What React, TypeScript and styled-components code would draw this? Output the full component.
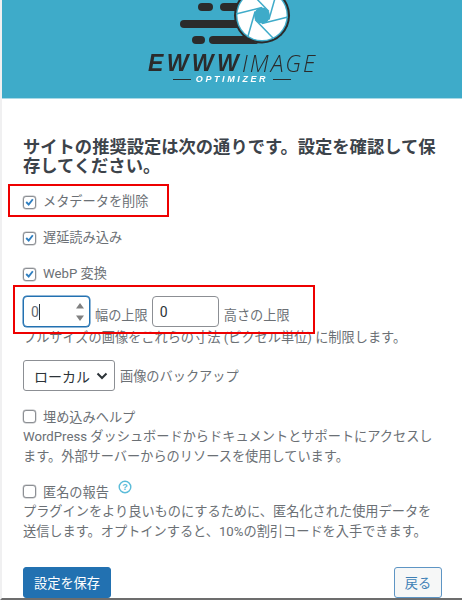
import React from "react";
import styled, { createGlobalStyle } from "styled-components";

const Global = createGlobalStyle`
  html, body { margin: 0; padding: 0; background: #fff; }
  body { width: 462px; height: 600px; overflow: hidden; }
`;
const FONT = `Roboto, "Noto Sans CJK JP", sans-serif`;
const JP = `"Noto Sans CJK JP", sans-serif`;

const Page = styled.div`
  position: relative;
  box-sizing: border-box;
  width: 462px;
  height: 600px;
  overflow: hidden;
  background: #fff;
  border-left: 2px solid #f0f0f1;
  border-bottom: 2px solid #6d6d6d;
  font-family: ${FONT};
  color: #6b7075;
  font-size: 13.2px;
`;
const Header = styled.header`
  height: 98px;
  background: #3eabc9;
  border-bottom: 1px solid #a9d9e6;
  display: flex;
  justify-content: center;
  overflow: hidden;
`;
const Logo = styled.div`
  width: 168px;
  height: 98px;
  display: flex;
  flex-direction: column;
  align-items: center;
  filter: blur(0.35px);
`;
const Mark = styled.svg`
  display: block;
  flex: none;
`;
const Wordmark = styled.div`
  margin-top: 5px;
  width: 168px;
  height: 20px;
  display: flex;
  align-items: center;
  justify-content: space-between;
  line-height: 20px;
  white-space: nowrap;
  color: #2b2b2b;
  font-family: "Liberation Sans", sans-serif;
  font-size: 23px;
`;
const Strong = styled.span`
  font-weight: 700;
  font-style: italic;
  letter-spacing: 3.4px;
`;
const Thin = styled.span`
  font-family: "Open Sans", sans-serif;
  font-weight: 300;
  font-style: italic;
  letter-spacing: 2px;
`;
const Tagline = styled.div`
  margin-top: 1px;
  display: flex;
  align-items: center;
  gap: 5px;
  color: #fff;
  font-family: "Liberation Sans", sans-serif;
  font-weight: 700;
  font-style: italic;
  font-size: 9px;
  letter-spacing: 2.6px;
  line-height: 10px;
`;
const Dash = styled.span`
  width: 18px;
  height: 1px;
  background: #2b2b2b;
`;
const Content = styled.main`
  padding: 37px 20px 0 21px;
`;
const Title = styled.h1`
  margin: 0 0 17px;
  font-family: ${JP};
  font-size: 17.3px;
  line-height: 19px;
  font-weight: 700;
  color: #3c434a;
  width: 420px;
`;
const CheckRow = styled.label<{ $gap?: number }>`
  display: flex;
  align-items: center;
  height: 22px;
  margin-bottom: ${(p) => p.$gap ?? 14}px;
  line-height: 22px;
`;
const Box = styled.span`
  box-sizing: border-box;
  width: 13px;
  height: 13px;
  margin-right: 7px;
  border: 1px solid #8c8f94;
  border-radius: 3px;
  background: #fff;
  box-shadow: 0 0 0 0.4px #b5b7ba;
  display: inline-flex;
  align-items: center;
  justify-content: center;
  flex: none;
`;
const Limits = styled.div`
  display: flex;
  align-items: center;
  height: 31px;
`;
const NumberField = styled.div<{ $focus?: boolean; $left?: number }>`
  box-sizing: border-box;
  width: 67px;
  height: 31px;
  margin-left: ${(p) => p.$left ?? 0}px;
  border: 1px solid ${(p) => (p.$focus ? "#2271b1" : "#8c8f94")};
  box-shadow: ${(p) => (p.$focus ? "0 0 0 0.5px #2271b1" : "none")};
  border-radius: 4px;
  padding: 0 7px;
  display: flex;
  align-items: center;
  justify-content: space-between;
  color: #2c3338;
  font-size: 14px;
  background: #fff;
`;
const Value = styled.span<{ $caret?: boolean }>`
  display: inline-block;
  line-height: 16px;
  color: ${(p) => (p.$caret ? "#646970" : "#2c3338")};
  border-right: ${(p) => (p.$caret ? "1px solid #2c3338" : "none")};
`;
const Spin = styled.svg`
  display: block;
  margin-right: -2px;
`;
const LimitLabel = styled.span`
  margin: 5px 0 0 5px;
  white-space: nowrap;
`;
const Desc = styled.p<{ $mt?: number }>`
  margin: ${(p) => p.$mt ?? 0}px 0 0;
  line-height: 19.5px;
  white-space: nowrap;
`;
const BackupRow = styled.div`
  display: flex;
  align-items: center;
  margin-top: 12.5px;
  height: 31px;
`;
const Select = styled.div`
  box-sizing: border-box;
  width: 92px;
  height: 31px;
  border: 1px solid #8c8f94;
  border-radius: 3px;
  display: flex;
  align-items: center;
  padding-left: 10px;
  gap: 6px;
  font-size: 14px;
  color: #2c3338;
  background: #fff;
  margin-right: 5px;
  white-space: nowrap;
`;
const Help = styled.label`
  display: flex;
  align-items: center;
  height: 20px;
  margin: 15px 0 1px;
`;
const HelpIcon = styled.svg`
  margin: -8px 0 0 9px;
  display: block;
`;
const Footer = styled.div`
  display: flex;
  justify-content: space-between;
  align-items: flex-end;
  margin-top: 25.5px;
`;
const Primary = styled.button`
  box-sizing: border-box;
  width: 88px;
  height: 31px;
  border: 1px solid #2271b1;
  border-radius: 3px;
  background: #2271b1;
  color: #fff;
  font-family: ${JP};
  font-size: 13.2px;
  padding: 0;
`;
const Secondary = styled.button`
  box-sizing: border-box;
  width: 48px;
  height: 31px;
  border: 1px solid #5e95c4;
  border-radius: 3px;
  background: #f6f7f7;
  color: #3d7fb5;
  font-family: ${JP};
  font-size: 13.2px;
  padding: 0;
`;
const Highlight = styled.div<{ $x: number; $y: number; $w: number; $h: number }>`
  position: absolute;
  box-sizing: border-box;
  left: ${(p) => p.$x - 2}px;
  top: ${(p) => p.$y}px;
  width: ${(p) => p.$w}px;
  height: ${(p) => p.$h}px;
  border: 2px solid #ee0000;
  pointer-events: none;
`;

const Tick = () => (
  <svg width="12" height="12" viewBox="0 0 20 20">
    <path d="M16 5 L8.5 14.5 L4 10" fill="none" stroke="#2f7fc1" strokeWidth="3.4" />
  </svg>
);

const LogoMark = () => (
  <Mark width="168" height="48" viewBox="0 0 168 48">
    <rect x="50" y="3" width="15" height="8" rx="4" fill="#2b2b2b" />
    <path d="M76 3 H105 V11 H76 a4 4 0 0 1 0 -8Z" fill="#2b2b2b" />
    <path d="M36 20 H100 V28 H36 a4 4 0 0 1 0 -8Z" fill="#2b2b2b" />
    <rect x="44" y="36" width="13" height="8" rx="4" fill="#2b2b2b" />
    <path d="M65 36 H96 L110 44 H65 a4 4 0 0 1 0 -8Z" fill="#2b2b2b" />
    <circle cx="114" cy="15.5" r="28" fill="#2b2b2b" />
    <circle cx="114" cy="15.5" r="26" fill="#3eabc9" />
    <circle cx="114" cy="15.5" r="24.6" fill="#fff" />
    <g stroke="#3eabc9" strokeWidth="1.5" fill="none">
      {[0, 60, 120, 180, 240, 300].map((a) => (
        <path key={a} d="M114 7.5 L88 14" transform={`rotate(${a} 114 15.5)`} />
      ))}
    </g>
    <circle cx="114" cy="15.5" r="8" fill="#3eabc9" />
  </Mark>
);

export default function App() {
  return (
    <>
      <Global />
      <Page>
        <Header>
          <Logo>
            <LogoMark />
            <Wordmark><Strong>EWWW</Strong><Thin>IMAGE</Thin></Wordmark>
            <Tagline><Dash />OPTIMIZER<Dash /></Tagline>
          </Logo>
        </Header>
        <Content>
          <Title>サイトの推奨設定は次の通りです。設定を確認して保存してください。</Title>
          <CheckRow><Box><Tick /></Box>メタデータを削除</CheckRow>
          <CheckRow><Box><Tick /></Box>遅延読み込み</CheckRow>
          <CheckRow $gap={11}><Box><Tick /></Box>WebP 変換</CheckRow>
          <Limits>
            <NumberField $focus>
              <Value $caret>0</Value>
              <Spin width="8" height="20" viewBox="0 0 8 20">
                <path d="M4 1 L8 6.5 H0Z M4 19 L0 13.5 H8Z" fill="#808080" />
              </Spin>
            </NumberField>
            <LimitLabel>幅の上限</LimitLabel>
            <NumberField $left={4}>
              <Value>0</Value>
            </NumberField>
            <LimitLabel>高さの上限</LimitLabel>
          </Limits>
          <Desc $mt={1}>フルサイズの画像をこれらの寸法 (ピクセル単位) に制限します。</Desc>
          <BackupRow>
            <Select>
              ローカル
              <svg width="12" height="8" viewBox="0 0 12 8">
                <path d="M1.5 1.5 L6 6 L10.5 1.5" fill="none" stroke="#2c3338" strokeWidth="2" />
              </svg>
            </Select>
            画像のバックアップ
          </BackupRow>
          <section>
            <Help><Box />埋め込みヘルプ</Help>
            <Desc>WordPress ダッシュボードからドキュメントとサポートにアクセスし</Desc>
            <Desc>ます。外部サーバーからのリソースを使用しています。</Desc>
          </section>
          <section>
            <Help>
              <Box />匿名の報告
              <HelpIcon width="14" height="14" viewBox="0 0 14 14">
                <circle cx="7" cy="7" r="5.8" fill="none" stroke="#5bbcd9" strokeWidth="1.4" />
                <text x="7" y="10.2" textAnchor="middle" fontSize="9" fontWeight="700" fill="#5bbcd9" fontFamily="Liberation Sans">?</text>
              </HelpIcon>
            </Help>
            <Desc>プラグインをより良いものにするために、匿名化された使用データを</Desc>
            <Desc>送信します。オプトインすると、10%の割引コードを入手できます。</Desc>
          </section>
          <Footer>
            <Primary>設定を保存</Primary>
            <Secondary>戻る</Secondary>
          </Footer>
        </Content>
        <Highlight $x={8} $y={184} $w={161} $h={33} />
        <Highlight $x={13} $y={285} $w={302} $h={49} />
      </Page>
    </>
  );
}
